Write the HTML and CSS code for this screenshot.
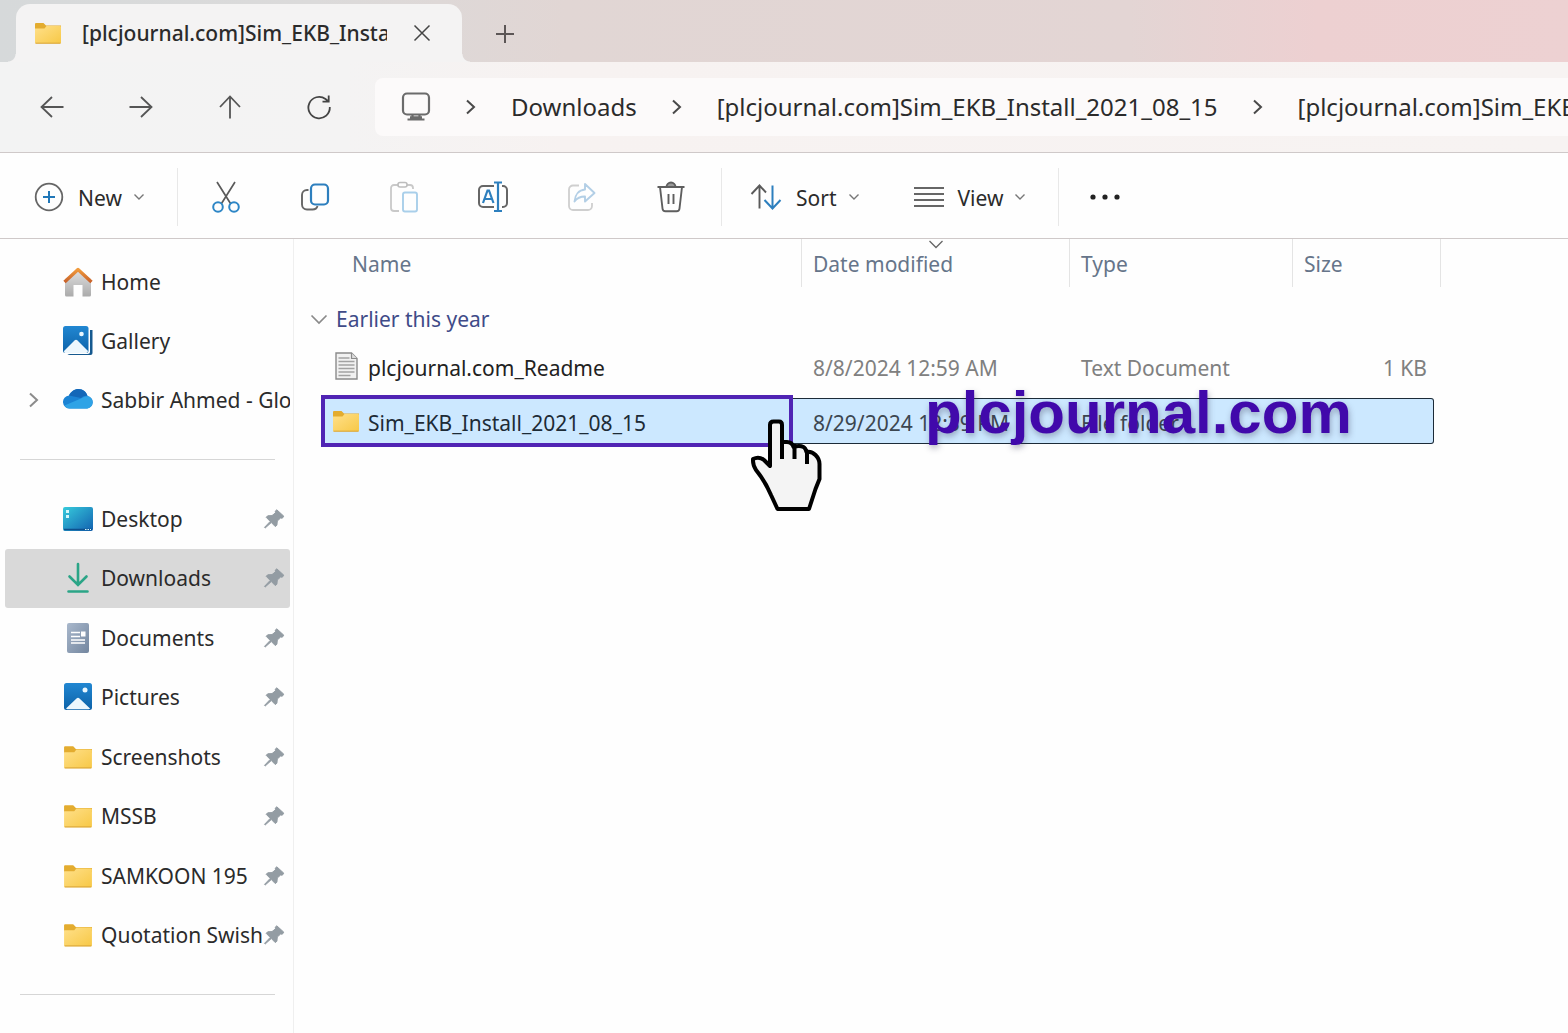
FILE: index.html
```html
<!DOCTYPE html>
<html lang="en">
<head>
<meta charset="utf-8">
<meta name="viewport" content="width=device-width, initial-scale=1">
<title>[plcjournal.com]Sim_EKB_Install_2021_08_15</title>
<link rel="stylesheet" href="styles.css">
</head>
<body>
<svg class="defs" aria-hidden="true">
  <defs>
    <linearGradient id="g-folder" x1="0" y1="0" x2="1" y2="1"><stop offset="0" stop-color="#ffe08a"/><stop offset="1" stop-color="#f7c846"/></linearGradient>
    <linearGradient id="g-roof" x1="0" y1="0" x2="0" y2="1"><stop offset="0" stop-color="#f09a3c"/><stop offset="1" stop-color="#c9622a"/></linearGradient>
    <linearGradient id="g-wall" x1="0" y1="0" x2="0" y2="1"><stop offset="0" stop-color="#e2e2e2"/><stop offset="1" stop-color="#ababab"/></linearGradient>
    <linearGradient id="g-photo" x1="0" y1="0" x2="0" y2="1"><stop offset="0" stop-color="#2187d2"/><stop offset="1" stop-color="#0d62a8"/></linearGradient>
    <linearGradient id="g-desk" x1="0" y1="0" x2="1" y2="1"><stop offset="0" stop-color="#37cbdc"/><stop offset="1" stop-color="#1261b0"/></linearGradient>
    <linearGradient id="g-doc" x1="0" y1="0" x2="1" y2="1"><stop offset="0" stop-color="#a9b8cc"/><stop offset="1" stop-color="#73869f"/></linearGradient>
    <symbol id="folder" viewBox="0 0 28 22">
      <path d="M1 2a1 1 0 0 1 1-1h7.500l2.500 2.500H27v4H1z" fill="#e3ac2f"/>
      <path d="M1 6.500h9.500L12.500 4H26a1 1 0 0 1 1 1v15.500a1 1 0 0 1-1 1H2a1 1 0 0 1-1-1z" fill="url(#g-folder)"/>
      <path d="M1.500 21.200h25" stroke="#d9a437" stroke-width="1"/>
    </symbol>
    <symbol id="pin" viewBox="0 0 22 22">
      <path d="M13.800 1.800 20.800 8.200 19.300 10.200 17.600 10 14.300 13 13.900 17.200 12.300 18.600 8.300 14.500 2.200 20 1.500 19.400 7.200 13.400 3.200 9.300 4.700 7.800 9 7.600 12.500 4.800 12.200 3.200z" fill="#939ca3" stroke="#939ca3" stroke-linejoin="round"/>
    </symbol>
    <symbol id="down" viewBox="0 0 12 8"><path d="M1.500 1.500 6 6l4.500-4.500" fill="none" stroke="currentColor" stroke-width="1.400"/></symbol>
    <symbol id="right" viewBox="0 0 12 16"><path d="M2 1.500 9 8l-7 6.500" fill="none" stroke="currentColor" stroke-width="2"/></symbol>
  </defs>
</svg>

<header class="titlebar">
  <div class="tab">
    <svg class="ic-folder" aria-hidden="true"><use href="#folder"/></svg>
    <span class="tab-title">[plcjournal.com]Sim_EKB_Install_2021_08_15</span>
    <button class="plain tab-close" aria-label="Close tab"><svg width="18" height="18" viewBox="0 0 18 18" fill="none" stroke="#444" stroke-width="1.500"><path d="m1.500 1.500 15 15m0-15-15 15"/></svg></button>
  </div>
  <button class="plain tab-add" aria-label="New tab"><svg width="20" height="20" viewBox="0 0 20 20" fill="none" stroke="#5c5656" stroke-width="2"><path d="M10 1v18M1 10h18"/></svg></button>
</header>

<div class="navbar">
  <div class="nav-buttons">
    <button class="plain" aria-label="Back"><svg width="24" height="24" viewBox="0 0 24 24" fill="none" stroke="#555" stroke-width="1.800"><path d="M23.500 12H2M12 2 1.500 12 12 22"/></svg></button>
    <button class="plain" aria-label="Forward"><svg width="24" height="24" viewBox="0 0 24 24" fill="none" stroke="#555" stroke-width="1.800"><path d="M.5 12H22M12 2l10.500 10L12 22"/></svg></button>
    <button class="plain" aria-label="Up"><svg width="24" height="24" viewBox="0 0 24 24" fill="none" stroke="#555" stroke-width="1.800"><path d="M12 23.500V2M2 12 12 1.500 22 12"/></svg></button>
    <button class="plain" aria-label="Refresh"><svg width="26" height="26" viewBox="0 0 26 26" fill="none" stroke="#444" stroke-width="1.800"><path d="M23.800 13A10.700 10.700 0 1 1 19.500 5L22.500 7.500M22.700 1.500v6.200h-6.200"/></svg></button>
  </div>
  <nav class="address" aria-label="Address">
    <svg class="ic-pc" viewBox="0 0 30 30" fill="none" stroke="#6b6b6b" stroke-width="2.200" aria-hidden="true"><rect x="2" y="1.500" width="26" height="21" rx="4"/><path d="M11.500 23v3.500m7-3.500v3.500M6.500 27.500h17M9 25.300h12"/></svg>
    <svg class="ic-right" aria-hidden="true"><use href="#right"/></svg>
    <a href="#downloads">Downloads</a>
    <svg class="ic-right" aria-hidden="true"><use href="#right"/></svg>
    <a href="#archive">[plcjournal.com]Sim_EKB_Install_2021_08_15</a>
    <svg class="ic-right" aria-hidden="true"><use href="#right"/></svg>
    <a href="#install">[plcjournal.com]Sim_EKB_Install_2021_08_15</a>
  </nav>
</div>

<div class="toolbar" role="toolbar" aria-label="Commands">
  <button class="plain labelled new">
    <svg width="30" height="30" viewBox="0 0 30 30" fill="none" aria-hidden="true"><circle cx="15" cy="15" r="13.300" stroke="#666" stroke-width="1.800"/><path d="M15 9v12M9 15h12" stroke="#2077b8" stroke-width="2"/></svg>
    <span>New</span><svg class="ic-down" aria-hidden="true"><use href="#down"/></svg>
  </button>
  <div class="icon-group">
    <button class="plain" aria-label="Cut"><svg width="30" height="32" viewBox="0 0 30 32" fill="none"><path d="m6 1 13.500 21.500M24 1 10.500 22.500" stroke="#5a5a5a" stroke-width="1.700"/><circle cx="7" cy="26" r="4.800" stroke="#2d86c6" stroke-width="2"/><circle cx="23" cy="26" r="4.800" stroke="#2d86c6" stroke-width="2"/></svg></button>
    <button class="plain" aria-label="Copy"><svg width="30" height="30" viewBox="0 0 30 30" fill="none"><path d="M8.500 8H7a5 5 0 0 0-5 5v9.500a5 5 0 0 0 5 5h5.500c3 0 4.500-1.500 5-3.500" stroke="#666" stroke-width="1.900"/><rect x="11" y="2.500" width="17" height="20" rx="4" stroke="#2d7fbe" stroke-width="2.200"/></svg></button>
    <button class="plain" aria-label="Paste" disabled><svg width="30" height="32" viewBox="0 0 30 32" fill="none"><path d="M9 4H5a3 3 0 0 0-3 3v20a3 3 0 0 0 3 3h5M18 4h3a3 3 0 0 1 3 3v1" stroke="#c9c9c9" stroke-width="1.800"/><rect x="9" y="1.500" width="9" height="4.500" rx="2" stroke="#bdbdbd" stroke-width="1.600"/><rect x="14" y="11.500" width="14" height="19" rx="2" stroke="#a9cfea" stroke-width="1.900"/></svg></button>
    <button class="plain" aria-label="Rename"><svg width="32" height="32" viewBox="0 0 32 32" fill="none"><path d="M17 5H6a4 4 0 0 0-4 4v13a4 4 0 0 0 4 4h11M25 5h1a4 4 0 0 1 4 4v13a4 4 0 0 1-4 4h-1" stroke="#666" stroke-width="2"/><path d="M6 22 10.500 9.500h1.500L16.500 22M8 18h7" stroke="#2d7fbe" stroke-width="2.200"/><path d="M17 1.500h8M17 30h8M21 1.500V30" stroke="#2d7fbe" stroke-width="2.200"/></svg></button>
    <button class="plain" aria-label="Share" disabled><svg width="30" height="30" viewBox="0 0 30 30" fill="none"><path d="M12 3.500H6a4 4 0 0 0-4 4V24a4 4 0 0 0 4 4h15a4 4 0 0 0 4-4v-3" stroke="#cfcfcf" stroke-width="1.800"/><path d="m18 2 9.500 9L18 19.500V14.500c-5 0-8 1.500-10.500 5C8 12.500 12 8 18 7.500z" stroke="#b3cfe6" stroke-width="1.900" stroke-linejoin="round"/></svg></button>
    <button class="plain" aria-label="Delete"><svg width="30" height="32" viewBox="0 0 30 32" fill="none" stroke="#5e5e5e" stroke-width="1.900"><path d="M1.500 6h27M4 6l2.500 21.500a3 3 0 0 0 3 2.800h11a3 3 0 0 0 3-2.800L26 6M12.500 13v10M17.500 13v10"/><path d="M10.500 6a4.500 4.500 0 0 1 9 0z" fill="#999"/></svg></button>
  </div>
  <div class="view-group">
    <button class="plain labelled">
      <svg width="32" height="26" viewBox="0 0 32 26" fill="none" aria-hidden="true"><path d="M9.500 24.500V2M1.500 10 9.500 1.500 16 8.500" stroke="#5a5a5a" stroke-width="1.900"/><path d="M22.500 1.500V24M14.500 16l8 8.500 8-8.500" stroke="#2d7fbe" stroke-width="2"/></svg>
      <span>Sort</span><svg class="ic-down" aria-hidden="true"><use href="#down"/></svg>
    </button>
    <button class="plain labelled">
      <svg width="30" height="22" viewBox="0 0 30 22" stroke="#666" stroke-width="2" aria-hidden="true"><path d="M0 2h30M0 8h30M0 14h30M0 20h30"/></svg>
      <span>View</span><svg class="ic-down" aria-hidden="true"><use href="#down"/></svg>
    </button>
  </div>
  <button class="plain more" aria-label="See more"><svg width="32" height="8" viewBox="0 0 32 8" fill="#222"><circle cx="4" cy="4" r="2.600"/><circle cx="16" cy="4" r="2.600"/><circle cx="28" cy="4" r="2.600"/></svg></button>
</div>

<div class="content">
  <aside class="sidebar">
    <ul class="places top">
      <li><a href="#home"><svg class="place-icon" viewBox="0 0 30 32" aria-hidden="true"><path d="M2 13 15 3l13 10v16a1.500 1.500 0 0 1-1.500 1.500H19.500V19h-9v11.500H3.500A1.500 1.500 0 0 1 2 29z" fill="url(#g-wall)"/><path d="M1.500 16 15 3.500 28.500 16" fill="none" stroke="url(#g-roof)" stroke-width="3.400" stroke-linejoin="round"/></svg><span>Home</span></a></li>
      <li><a href="#gallery"><svg class="place-icon" viewBox="0 0 30 32" aria-hidden="true"><path d="M5 5h24.500v23a2 2 0 0 1-2 2H7a3 3 0 0 1-3-3z" fill="#15598f"/><rect width="27" height="28" y="1" rx="2.500" fill="#fff"/><rect width="25.500" height="27" y="1" rx="2.500" fill="url(#g-photo)"/><circle cx="18.500" cy="9" r="2.300" fill="#e8f7ff"/><path d="m1 26 10.500-10.500c1-1 2-1 3 0L25 26c-.5 1.500-1 2-2.500 2h-20C1.500 28 1 27.500 1 26z" fill="#edf7fd"/></svg><span>Gallery</span></a></li>
      <li><a href="#onedrive"><svg class="ic-right expand" aria-hidden="true"><use href="#right"/></svg><svg class="place-icon" viewBox="0 0 30 32" aria-hidden="true"><path d="M7 24.500a6.500 6.500 0 0 1-1-13C8 7.500 11.500 5 15.500 5c4.500 0 8 3 9 7a6.300 6.300 0 0 1-.5 12.500z" fill="#1b83d4"/><path d="M6 11.500C8 7.500 11.500 5 15.500 5c4.500 0 8 3 9 7-3-.5-4.500.5-6.500 2z" fill="#1467b8"/><path d="M1.500 21.500 18 14.500c2-1.500 4-2.500 6.500-2.300 3.500.5 5 3.500 5 6 0 3.500-2.500 6.300-6 6.300H7c-2.300 0-4.300-1-5.500-3z" fill="#2fa3e6"/></svg><span>Sabbir Ahmed - Global</span></a></li>
    </ul>
    <hr>
    <ul class="places pinned">
      <li><a href="#desktop"><svg class="place-icon" viewBox="0 0 30 32" aria-hidden="true"><rect y="4" width="30" height="24" rx="2" fill="url(#g-desk)"/><path d="M3 7h3v3H3zm0 5h3v3H3z" fill="#d5f8fb"/><path d="M1 26.500h28" stroke="#0e4f8c" stroke-width="1.500"/><path d="M22 26.500h6" stroke="#d5f8fb" stroke-width="1.200" stroke-dasharray="1.500 1"/></svg><span>Desktop</span><svg class="ic-pin" aria-hidden="true"><use href="#pin"/></svg></a></li>
      <li><a class="current" href="#downloads" aria-current="page"><svg class="place-icon" viewBox="0 0 30 32" fill="none" stroke="#2ba587" stroke-width="2.600" stroke-linecap="round" aria-hidden="true"><path d="M15 2v20M6.500 14.500 15 23l8.500-8.500M5.500 29.500h19"/></svg><span>Downloads</span><svg class="ic-pin" aria-hidden="true"><use href="#pin"/></svg></a></li>
      <li><a href="#documents"><svg class="place-icon" viewBox="0 0 30 32" aria-hidden="true"><rect x="4" y="1" width="22" height="30" rx="2" fill="url(#g-doc)"/><path d="M8 10.500h9M8 14.500h9M8 18h14M8 21h14" stroke="#fff" stroke-width="1.400"/><rect x="18" y="9.500" width="4.500" height="5" fill="#fff"/></svg><span>Documents</span><svg class="ic-pin" aria-hidden="true"><use href="#pin"/></svg></a></li>
      <li><a href="#pictures"><svg class="place-icon" viewBox="0 0 30 32" aria-hidden="true"><rect x="1" y="2" width="28" height="27" rx="2.500" fill="url(#g-photo)"/><circle cx="22" cy="9" r="2.500" fill="#e8f7ff"/><path d="m3 27.500 10.500-10c1-1 2-1 3 0L27 27.500c-.5.700-1 .7-2 .7H5c-1 0-1.500 0-2-.7z" fill="#edf7fd"/></svg><span>Pictures</span><svg class="ic-pin" aria-hidden="true"><use href="#pin"/></svg></a></li>
      <li><a href="#screenshots"><svg class="place-icon" aria-hidden="true"><use href="#folder"/></svg><span>Screenshots</span><svg class="ic-pin" aria-hidden="true"><use href="#pin"/></svg></a></li>
      <li><a href="#mssb"><svg class="place-icon" aria-hidden="true"><use href="#folder"/></svg><span>MSSB</span><svg class="ic-pin" aria-hidden="true"><use href="#pin"/></svg></a></li>
      <li><a href="#samkoon"><svg class="place-icon" aria-hidden="true"><use href="#folder"/></svg><span>SAMKOON 195</span><svg class="ic-pin" aria-hidden="true"><use href="#pin"/></svg></a></li>
      <li><a href="#quotation"><svg class="place-icon" aria-hidden="true"><use href="#folder"/></svg><span>Quotation Swish</span><svg class="ic-pin" aria-hidden="true"><use href="#pin"/></svg></a></li>
    </ul>
    <hr>
  </aside>

  <main class="files">
    <table>
      <colgroup><col class="c-name"><col class="c-date"><col class="c-type"><col class="c-size"></colgroup>
      <thead>
        <tr><th scope="col">Name</th><th scope="col">Date modified<svg class="ic-sort" viewBox="0 0 16 9" fill="none" stroke="#666" stroke-width="1.300" aria-hidden="true"><path d="m1.500 1 6.500 6.500L14.500 1"/></svg></th><th scope="col">Type</th><th scope="col">Size</th></tr>
      </thead>
      <tbody>
        <tr class="group"><th colspan="4" scope="rowgroup"><button class="plain"><svg width="18" height="11" viewBox="0 0 18 11" fill="none" stroke="#8a8a8a" stroke-width="1.700" aria-hidden="true"><path d="m1.500 1.500 7.500 7.500 7.500-7.500"/></svg>Earlier this year</button></th></tr>
        <tr>
          <td><div class="cell name"><svg class="ic-file" viewBox="0 0 28 28" aria-hidden="true"><path d="M4 1h15.500L25 6.500V27H4z" fill="#f1f1f1" stroke="#8b8b8b" stroke-width="1.400"/><path d="M19.500 1v5.500H25" fill="#ddd" stroke="#8b8b8b" stroke-width="1.200"/><path d="M6.500 6h11M6.500 9.500h16M6.500 13h16M6.500 16.500h16M6.500 20h16M6.500 23.500h12" stroke="#a2a2a2" stroke-width="1.300"/></svg><span class="label">plcjournal.com_Readme</span></div></td>
          <td><div class="cell"><span class="label">8/8/2024 12:59 AM</span></div></td>
          <td><div class="cell"><span class="label">Text Document</span></div></td>
          <td><div class="cell size"><span class="label">1 KB</span></div></td>
        </tr>
        <tr class="selected">
          <td><div class="cell name"><svg class="ic-folder" aria-hidden="true"><use href="#folder"/></svg><span class="label">Sim_EKB_Install_2021_08_15</span>
            <span class="highlight"></span>
            <svg class="hand" viewBox="0 0 72 92" aria-hidden="true"><path d="M19 47V6q0-3.500 3.500-3.500H28q3 0 3 3.500V23h5q5 0 6.500 5 6-2 10 0 2 1 3 5 5-1 9 3 4 4 4 9v15l-4 10L58 90H26.500L20 76Q14 62 5 51 2 46 2 42v-2q6-3 11 1z" fill="#f4f4f4" stroke="#000" stroke-width="4" stroke-linejoin="round"/><path d="M31 18V40M43.500 25v15M56 31v14" fill="none" stroke="#000" stroke-width="4"/></svg>
          </div></td>
          <td><div class="cell"><span class="label">8/29/2024 12:39 PM</span></div></td>
          <td><div class="cell"><span class="label">File folder</span></div></td>
          <td><div class="cell size"></div></td>
        </tr>
      </tbody>
    </table>
    <div class="watermark">plcjournal.com</div>
  </main>
</div>
</body>
</html>
```
FILE: styles.css
```css
* { box-sizing: border-box; }

body {
  margin: 0;
  min-height: 100vh;
  display: flex;
  flex-direction: column;
  overflow: hidden;
  background: #fefefe;
  color: #2b2b2b;
  font: 21px/30px "Noto Sans", "Open Sans", sans-serif;
}

a { color: inherit; text-decoration: none; }
svg { display: block; flex: none; }
.defs { position: absolute; width: 0; height: 0; }

.plain {
  display: flex;
  align-items: center;
  justify-content: center;
  padding: 0;
  border: 0;
  background: none;
  color: inherit;
  font: inherit;
}

.ic-folder { width: 28px; height: 22px; }
.ic-right { width: 12px; height: 16px; color: #4a4a4a; }
.ic-down { width: 12px; height: 8px; color: #777; }

/* Title bar */
.titlebar {
  display: flex;
  align-items: flex-end;
  height: 62px;
  padding-left: 16px;
  background: linear-gradient(90deg, #d6d9da 0%, #dbdada 20%, #e1d6d4 36%, #e3d5d4 72%, #edd0d1 84%, #edd1d2 100%);
}

.tab {
  position: relative;
  display: flex;
  align-items: center;
  width: 446px;
  height: 58px;
  padding: 0 31px 0 18px;
  border-radius: 14px 14px 0 0;
  background: #f4f3f3;
}

.tab::before,
.tab::after {
  content: "";
  position: absolute;
  bottom: 0;
  width: 8px;
  height: 8px;
}
.tab::before { right: 100%; background: radial-gradient(circle at 0 0, transparent 7px, #f4f3f3 8px); }
.tab::after { left: 100%; background: radial-gradient(circle at 100% 0, transparent 7px, #f4f3f3 8px); }

.tab-title {
  flex: 1;
  margin: 0 26px 0 20px;
  overflow: hidden;
  white-space: nowrap;
  font-weight: 500;
}

.tab-add { width: 40px; height: 56px; margin-left: 23px; }

/* Navigation bar */
.navbar {
  display: flex;
  align-items: center;
  height: 91px;
  border-bottom: 1px solid #cfc9c9;
  background: linear-gradient(90deg, #f3f3f3 0%, #f4f3f3 22%, #f7f2f1 36%, #f7f3f2 100%);
}

.nav-buttons { display: flex; flex: none; padding: 0 12px 0 7px; }
.nav-buttons button { width: 89px; height: 48px; }

.address {
  display: flex;
  flex: 1;
  align-items: center;
  gap: 34px;
  min-width: 0;
  height: 58px;
  padding-left: 26px;
  border-radius: 8px 0 0 8px;
  overflow: hidden;
  background: #fcfafa;
  font-size: 24px;
  white-space: nowrap;
}
.ic-pc { width: 30px; height: 30px; }

/* Command bar */
.toolbar {
  display: flex;
  align-items: center;
  height: 86px;
  padding-top: 2px;
  border-bottom: 1px solid #cfc9c9;
}
.labelled { gap: 14px; }
.labelled span { padding-top: 3px; }
.labelled span + svg { margin-left: -3px; }
.new { width: 177px; height: 58px; padding-left: 2px; }
.icon-group,
.view-group {
  display: flex;
  align-items: center;
  height: 58px;
  border: solid #e8e8e8;
  border-width: 0 1px;
}
.icon-group { padding: 0 6px 0 3px; }
.icon-group button { width: 89px; height: 48px; }
.view-group { gap: 54px; padding: 0 32px 0 28px; border-left: 0; }
.more { width: 92px; height: 48px; }

/* Content area */
.content { display: flex; flex: 1; }

.sidebar {
  flex: none;
  width: 294px;
  padding: 13px 3px 0 5px;
  border-right: 1px solid #efefef;
}

.places {
  display: grid;
  grid-template-columns: minmax(0, 1fr);
  grid-auto-rows: 1fr;
  margin: 0;
  padding: 0;
  list-style: none;
}
.places.top { height: 178px; }
.places.pinned { height: 476px; }

.places a {
  position: relative;
  display: flex;
  align-items: center;
  gap: 8px;
  height: 100%;
  padding: 0 5px 0 58px;
  border-radius: 3px;
  white-space: nowrap;
}
.places.top a { padding-right: 0; }
.places a span { flex: 1; min-width: 0; overflow: hidden; }
.places .current { background: #d9d9d9; }
.place-icon { width: 30px; height: 32px; }
.ic-pin { width: 22px; height: 22px; margin-left: -8px; }
.expand { position: absolute; left: 23px; color: #8c8c8c; }

.sidebar hr {
  height: 1px;
  margin: 29px 15px;
  border: 0;
  background: #d6d6d6;
}

/* File list */
.files { position: relative; flex: 1; min-width: 0; }

table { width: 1147px; table-layout: fixed; border-collapse: separate; border-spacing: 0; }
.c-name { width: 508px; }
.c-date { width: 268px; }
.c-type { width: 223px; }
.c-size { width: 148px; }

th, td { padding: 0; text-align: left; font-weight: 400; }

thead th {
  position: relative;
  height: 48px;
  padding: 2px 0 0 11px;
  border-right: 1px solid #e4e4e4;
  color: #66758a;
}
thead th:first-child { padding-left: 58px; }
.ic-sort { position: absolute; top: 1px; left: 50%; width: 16px; height: 9px; margin-left: -8px; }

.group th { height: 54px; padding: 10px 0 0 16px; }
.group button { gap: 8px; color: #3f4b88; }

.cell {
  display: flex;
  align-items: center;
  height: 46px;
  margin: 2px 0 7px;
  padding-left: 11px;
  color: #808080;
}
.cell.name { position: relative; gap: 8px; margin-left: 31px; padding-left: 7px; color: #222; }
.cell.size { justify-content: flex-end; margin-right: 7px; padding-right: 7px; }
.label { padding-top: 4px; }
.ic-file { width: 28px; height: 28px; }

.selected .cell {
  border: solid #1c2b38;
  border-width: 1px 0;
  background: #cce8ff;
  color: #3c4650;
}
.selected .name { color: #1d2b36; }
.selected .size { border-right-width: 1px; border-radius: 0 3px 3px 0; }

.highlight {
  position: absolute;
  inset: -4px 9px -4px -4px;
  border: 4px solid #5024b4;
}

.hand { position: absolute; z-index: 1; top: 20px; left: 426px; width: 72px; height: 92px; }

.watermark {
  position: absolute;
  top: 140px;
  left: 631px;
  color: #4109ab;
  font: bold 60px/68px "Liberation Sans", Arial, sans-serif;
  text-shadow: 1px 3px 6px rgba(60, 60, 90, 0.4);
}
```
